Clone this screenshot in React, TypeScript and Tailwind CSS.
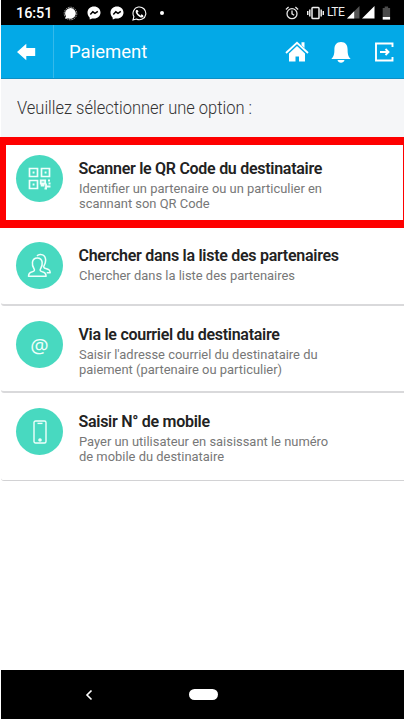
import type { ReactNode } from 'react';

function StatusBar() {
  return (
    <div className="flex h-[25px] items-center bg-black text-white">
      <span className="ml-[15px] mt-[2px] w-[38px] whitespace-nowrap text-[14.5px] leading-[23px] tracking-[-0.1px] font-medium">16:51</span>
      <svg className="ml-[9px] mt-px h-[15px] w-[15px]" viewBox="0 0 15 15">
        <circle cx="7.5" cy="7.5" r="6.3" fill="none" stroke="#aaa" strokeDasharray="1.6 .8" />
        <path d="M7.5 2a5.4 5.4 0 1 1-2.600 10.200l-2.700.7.8-2.600A5.400 5.400 0 0 1 7.500 2Z" fill="#fff" />
      </svg>
      <Messenger className="ml-[9px] mt-px h-[14px] w-[14px]" />
      <Messenger className="ml-[9px] mt-px h-[14px] w-[14px]" />
      <svg className="ml-[8px] mt-px h-[15px] w-[15px]" viewBox="0 0 15 15" fill="none" stroke="#fff">
        <path d="M1 14l.9-3.400A6.400 6.400 0 1 1 4.400 13Z" strokeWidth="1.100" />
        <path d="M5 4.200c-1.300 1.500.2 3.600 1.600 5 1.400 1.300 3.300 2.300 4.400.8" strokeWidth="1.600" />
        <path d="M5 4.300l.9 1.800M9 9l2 .9" strokeWidth="1.500" />
      </svg>
      <i className="ml-[13px] h-1 w-1 rounded-full bg-white" />
      <svg className="ml-[121px] h-[14px] w-[14px]" viewBox="0 0 14 14" fill="none" stroke="#e8e8e8" strokeWidth="1.3">
        <circle cx="7" cy="7.700" r="5" />
        <path d="M7 4.600v3.300l2.200 1.300M.9 3.400l2.700-2.300M13.100 3.400L10.400 1.100" />
      </svg>
      <svg className="ml-[8px] h-[14px] w-[17px]" viewBox="0 0 17 14" fill="none" stroke="#eee" strokeWidth="1.500">
        <rect x="5" y="1.500" width="7" height="11" rx=".8" />
        <path d="M2.800 3.500v7M14.200 3.500v7M.7 5v4M16.300 5v4" />
      </svg>
      <span className="ml-[3px] w-[18px] whitespace-nowrap text-[12px] leading-[25px] tracking-[-0.5px] text-[#eee]">LTE</span>
      <svg className="ml-[2px] h-[13px] w-[13px]" viewBox="0 0 13 13">
        <path d="M0 12.500L12.500 0v12.500Z" fill="#555" />
        <path d="M0 12.500L7.200 5.300v7.200Z" fill="#fff" />
      </svg>
      <svg className="ml-[2px] h-[13px] w-[13px]" viewBox="0 0 13 13">
        <path d="M0 12.500L12.500 0v12.500Z" fill="#fff" />
      </svg>
      <svg className="ml-[7px] h-[14px] w-[9px]" viewBox="0 0 9 14">
        <path d="M.7 2h2V.6h3.400V2h2v9H.7Z" fill="#4b4b4b" />
        <path d="M.7 11h7.400v2.600H.7Z" fill="#fff" />
      </svg>
    </div>
  );
}

function Messenger({ className }: { className: string }) {
  return (
    <svg className={className} viewBox="0 0 14 14">
      <path d="M7 .6c3.800 0 6.500 2.600 6.500 6s-2.700 6-6.500 6l-1.800-.2-2.400 1.100-.2-2C1.300 10.400.5 8.700.5 6.600c0-3.400 2.700-6 6.500-6Z" fill="#fff" />
      <path d="M3.300 8.400l2.500-2.600 2.200 1.600 2.800-2" fill="none" stroke="#000" strokeWidth="1.500" />
    </svg>
  );
}

function Header() {
  return (
    <header className="flex h-[54px] items-center border-b border-[#0c8fc4] bg-[#03a9e7] text-white">
      <div className="flex h-full w-[53px] items-center border-r border-[#35b9ea]">
        <svg className="ml-[15px] mt-px h-[18px] w-[21px]" viewBox="0 0 21 18" fill="#fff">
          <path d="M1 9L10.300.8V5h8.900v8h-8.900v4.200Z" />
        </svg>
      </div>
      <h1 className="ml-[15px] w-[80px] whitespace-nowrap text-[18.500px] leading-6">Paiement</h1>
      <svg className="ml-[136px] h-[22px] w-[24px]" viewBox="0 0 24 22">
        <path d="M1 12L12 1.800 23 12" fill="none" stroke="#fff" strokeWidth="1.800" />
        <path d="M16.500 1.300h3v5.800l-3-2.800Z" fill="#fff" />
        <path d="M4 12.500l8-7.600 8 7.600v8h-6v-5h-3.500v5H4Z" fill="#fff" />
      </svg>
      <svg className="ml-[21px] mt-[2px] h-[23px] w-[22px]" viewBox="0 0 22 23" fill="#fff">
        <path d="M11 1c4.700 0 6.600 3.300 6.600 7.500 0 5 .8 7 3 9.500H1.400c2.200-2.500 3-4.500 3-9.500C4.400 4.300 6.300 1 11 1ZM7.500 19h7c-.4 1.800-1.800 2.800-3.500 2.800S7.900 20.800 7.500 19Z" />
      </svg>
      <svg className="ml-[22px] h-[20px] w-[20px]" viewBox="0 0 20 20" fill="none" stroke="#fff" strokeWidth="1.900">
        <path d="M18.500 5V1.500H2v17h16.500V15M6 10h8.500M11.500 7l3 3-3 3" />
      </svg>
    </header>
  );
}

const qrIcon = (
  <svg className="h-[23px] w-[23px]" viewBox="0 0 23 23" fill="none" stroke="#effffb" strokeWidth="1.700">
    <path d="M1.500 1.500h8v8h-8ZM13.500 1.500h8v8h-8ZM1.500 13.500h8v8h-8Z" />
    <path d="M4.600 5.500h1.900M16.600 5.500h1.900M4.600 17.500h1.900" strokeWidth="1.900" />
    <path d="M12.700 13.500h4.500v3h-4.500ZM20 13.500h2M12.700 18.500h3.800M18 16.500v3h4.500M16.500 21.500h2.500M20.500 16.500h2" strokeWidth="1.800" />
  </svg>
);

const peopleIcon = (
  <svg className="h-[25px] w-[25px]" viewBox="0 0 25 25" fill="none" stroke="#effffb" strokeWidth="1.500" strokeLinejoin="round">
    <path d="M1.500 23.200c.1-3 1.100-3.700 3.800-4.400 2.100-.6 2.700-1.500 1.700-3.100C4.800 12.700 4 5 10.300 5s5.500 7.700 3.300 10.700c-1 1.600-.4 2.500 1.700 3.100 2.700.7 3.700 1.400 3.800 4.400Z" />
    <path d="M10 2.900c1.200-1.200 2.400-1.600 4-1.300 5.300.6 5.500 6.700 3.200 10.700-.9 1.600-.4 2.700 1.500 3.200 3.400.9 4.300 1.500 4.500 4.300h-3.500" />
  </svg>
);

const phoneIcon = (
  <svg className="h-[24px] w-[14px]" viewBox="0 0 14 24" fill="none" stroke="#effffb" strokeWidth="1.400">
    <rect x="1" y="1" width="12" height="22" rx="1.500" />
    <path d="M4.500 3.400h5" />
    <circle cx="7" cy="20" r="1.100" fill="#fff" />
  </svg>
);

interface OptionProps {
  icon: ReactNode;
  title: string;
  lines: string[];
}

function Option({ icon, title, lines }: OptionProps) {
  return (
    <div className="flex">
      <div className="flex h-[47px] w-[47px] shrink-0 items-center justify-center rounded-full bg-[#48d9c0]">{icon}</div>
      <div className="ml-[15.500px] mt-1 whitespace-nowrap">
        <h2 className="text-[16px] leading-[20px] font-semibold tracking-[-0.28px] text-[#222]">{title}</h2>
        <div className="mt-[2px] origin-left scale-x-[0.957] text-[13.500px] leading-[15px] text-[#777]">
          {lines.map((line) => (
            <p key={line}>{line}</p>
          ))}
        </div>
      </div>
    </div>
  );
}

export default function App() {
  return (
    <div className="flex h-[719px] w-[404px] flex-col overflow-hidden bg-white font-['Roboto',sans-serif]">
      <div className="ml-px">
        <StatusBar />
        <Header />
        <div className="h-[58px] bg-[#f5f6f8] pt-[17px] pl-[15.5px]">
          <p className="origin-left scale-x-[0.916] whitespace-nowrap text-[18px] leading-6 font-light text-[#333]">Veuillez sélectionner une option :</p>
        </div>
      </div>
      <div className="h-[91px] border-y-8 border-r border-l-[6px] border-[#fe0000] pt-[10px] pl-[10px]">
        <Option
          icon={qrIcon}
          title="Scanner le QR Code du destinataire"
          lines={['Identifier un partenaire ou un particulier en', 'scannant son QR Code']}
        />
      </div>
      <div className="ml-px h-[78px] rounded-bl-[3px] border-b-2 border-[#d9d9db] pt-[14px] pl-[15px]">
        <Option
          icon={peopleIcon}
          title="Chercher dans la liste des partenaires"
          lines={['Chercher dans la liste des partenaires']}
        />
      </div>
      <div className="ml-px h-[87px] rounded-bl-[3px] border-b-2 border-[#d9d9db] pt-[15px] pl-[15px]">
        <Option
          icon={<span className="font-['Open_Sans',sans-serif] text-[20.500px] leading-5 text-[#effffb]">@</span>}
          title="Via le courriel du destinataire"
          lines={["Saisir l'adresse courriel du destinataire du", 'paiement (partenaire ou particulier)']}
        />
      </div>
      <div className="ml-px h-[88px] rounded-bl-[3px] border-b border-[#d2d2d4] pt-[15px] pl-[15px]">
        <Option
          icon={phoneIcon}
          title="Saisir N° de mobile"
          lines={['Payer un utilisateur en saisissant le numéro', 'de mobile du destinataire']}
        />
      </div>
      <nav className="mt-auto ml-px flex h-[49px] items-center bg-black">
        <svg className="ml-[84px] h-[12px] w-[8px]" viewBox="0 0 8 12" fill="none" stroke="#fff" strokeWidth="1.600">
          <path d="M6.500 1.500L2 6l4.500 4.500" />
        </svg>
        <div className="ml-[96px] h-[11px] w-[29px] rounded-full bg-white" />
      </nav>
    </div>
  );
}
